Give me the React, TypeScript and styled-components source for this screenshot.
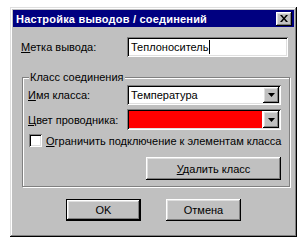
import React from "react";
import styled, { createGlobalStyle } from "styled-components";

const Global = createGlobalStyle`
  html, body { margin: 0; padding: 0; background: #ffffff; }
  body { font-family: "Liberation Sans", Arial, sans-serif; font-size: 11px; color: #000; }
  * { box-sizing: border-box; }
`;

const Page = styled.div`
  padding: 7px 0 0 10px;
`;

const Window = styled.div`
  width: 287px;
  height: 230px;
  background: #c0c0c0;
  padding: 3px;
  display: flex;
  flex-direction: column;
  box-shadow: inset -1px -1px #000, inset 1px 1px #dfdfdf, inset -2px -2px #808080, inset 2px 2px #fff;
`;

const TitleBar = styled.div`
  height: 17px;
  background: #000080;
  color: #fff;
  display: flex;
  align-items: center;
  justify-content: space-between;
  padding: 0 2px 0 3px;
  font-weight: bold;
  font-size: 11px;
  letter-spacing: 0.2px;
`;

const raised = `
  background: #c0c0c0;
  box-shadow: inset -1px -1px #000, inset 1px 1px #fff, inset -2px -2px #808080, inset 2px 2px #dfdfdf;
`;

const CloseBtn = styled.div`
  width: 16px;
  height: 14px;
  ${raised}
  display: flex;
  align-items: center;
  justify-content: center;
`;

const Content = styled.div`
  flex: 1;
  display: flex;
  flex-direction: column;
  padding: 10px 5px 0 8px;
`;

const Row = styled.div<{ $mt?: number }>`
  display: flex;
  align-items: center;
  margin-top: ${(p) => p.$mt ?? 0}px;
`;

const Label = styled.span<{ $w: number }>`
  width: ${(p) => p.$w}px;
  white-space: nowrap;
`;

const Sunken = styled.div<{ $w: number; $h: number; $bg?: string }>`
  width: ${(p) => p.$w}px;
  height: ${(p) => p.$h}px;
  background: ${(p) => p.$bg ?? "#fff"};
  box-shadow: inset 1px 1px #808080, inset -1px -1px #fff, inset 2px 2px #000, inset -2px -2px #dfdfdf;
  display: flex;
  align-items: center;
  padding: 2px;
`;

const InputText = styled.span`
  padding-left: 2px;
  display: flex;
  align-items: center;
`;

const Caret = styled.span`
  display: inline-block;
  width: 1px;
  height: 14px;
  background: #000;
`;

const ComboField = styled.div<{ $bg: string }>`
  flex: 1;
  height: 100%;
  background: ${(p) => p.$bg};
  padding-left: 2px;
  display: flex;
  align-items: center;
  margin-right: 1px;
`;

const DropBtn = styled.div`
  width: 16px;
  height: 100%;
  ${raised}
  display: flex;
  align-items: center;
  justify-content: center;
`;

const Group = styled.div`
  position: relative;
  margin: 20px 0 0 1px;
  width: 268px;
  border: 1px solid #808080;
  box-shadow: inset 1px 1px #fff, 1px 1px #fff;
  padding: 7px 8px 6px 5px;
  display: flex;
  flex-direction: column;
`;

const Legend = styled.span`
  position: absolute;
  top: -7px;
  left: 6px;
  padding: 0 1px;
  background: #c0c0c0;
  line-height: 13px;
`;

const Check = styled.div`
  width: 13px;
  height: 13px;
  flex: none;
  background: #fff;
  box-shadow: inset 1px 1px #808080, inset -1px -1px #fff, inset 2px 2px #000, inset -2px -2px #dfdfdf;
  margin: 0 4px 0 1px;
`;

const CheckText = styled.span`
  white-space: nowrap;
`;

const Button = styled.div<{ $w: number; $h: number; $default?: boolean }>`
  width: ${(p) => p.$w}px;
  height: ${(p) => p.$h}px;
  display: flex;
  align-items: center;
  justify-content: center;
  background: #c0c0c0;
  box-shadow: ${(p) =>
    p.$default
      ? "inset 0 0 0 1px #000, inset -2px -2px #000, inset 2px 2px #fff, inset -3px -3px #808080, inset 3px 3px #dfdfdf"
      : "inset -1px -1px #000, inset 1px 1px #fff, inset -2px -2px #808080, inset 2px 2px #dfdfdf"};
`;

const ButtonRow = styled.div`
  display: flex;
  justify-content: center;
  gap: 25px;
  margin-top: 12px;
  padding-right: 3px;
`;

const RightAlign = styled.div`
  display: flex;
  justify-content: flex-end;
  margin-top: 10px;
`;

const Arrow = () => (
  <svg width="7" height="4" viewBox="0 0 7 4">
    <path d="M0 0h7L3.5 4z" fill="#000" />
  </svg>
);

const CloseIcon = () => (
  <svg width="8" height="7" viewBox="0 0 8 7">
    <path d="M0 0h2l2 2.5L6 0h2L5 3.5 8 7H6L4 4.5 2 7H0l3-3.5z" fill="#000" />
  </svg>
);

export default function App() {
  return (
    <Page>
      <Global />
      <Window>
        <TitleBar>
          <span>Настройка выводов / соединений</span>
          <CloseBtn>
            <CloseIcon />
          </CloseBtn>
        </TitleBar>
        <Content>
          <Row>
            <Label $w={106}>
              <u>М</u>етка вывода:
            </Label>
            <Sunken $w={161} $h={20}>
              <InputText>
                Теплоноситель
                <Caret />
              </InputText>
            </Sunken>
          </Row>
          <Group>
            <Legend>Класс соединения</Legend>
            <Row>
              <Label $w={99}>
                <u>И</u>мя класса:
              </Label>
              <Sunken $w={154} $h={20}>
                <ComboField $bg="#fff">Температура</ComboField>
                <DropBtn>
                  <Arrow />
                </DropBtn>
              </Sunken>
            </Row>
            <Row $mt={4}>
              <Label $w={99}>
                <u>Ц</u>вет проводника:
              </Label>
              <Sunken $w={154} $h={21}>
                <ComboField $bg="#ff0000" />
                <DropBtn>
                  <Arrow />
                </DropBtn>
              </Sunken>
            </Row>
            <Row $mt={4}>
              <Check />
              <CheckText>
                <u>О</u>граничить подключение к элементам класса
              </CheckText>
            </Row>
            <RightAlign>
              <Button $w={135} $h={23}>
                <span>
                  <u>У</u>далить класс
                </span>
              </Button>
            </RightAlign>
          </Group>
          <ButtonRow>
            <Button $w={75} $h={22} $default>
              OK
            </Button>
            <Button $w={75} $h={22}>
              Отмена
            </Button>
          </ButtonRow>
        </Content>
      </Window>
    </Page>
  );
}
